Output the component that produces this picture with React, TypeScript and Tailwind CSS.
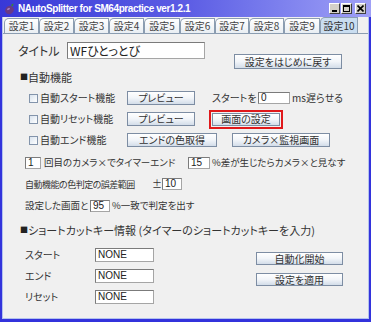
import type { FC, ReactNode } from 'react'

// ボタン (Swing 風のグラデーション)
const Btn: FC<{ className?: string; children: ReactNode }> = ({ className = '', children }) => (
  <div
    className={`flex shrink-0 items-center justify-center whitespace-nowrap border border-[#7d8da3] bg-gradient-to-b from-white via-[#f2f5f9] to-[#d3dde9] text-[10px] leading-none text-[#333] ${className}`}
  >
    {children}
  </div>
)

const Field: FC<{ className?: string; children?: ReactNode }> = ({ className = '', children }) => (
  <div
    className={`flex shrink-0 items-center border border-[#a5a5a5] border-l-[#7b7b7b] border-t-[#7b7b7b] bg-white pl-[2px] font-['Liberation_Sans',sans-serif] text-[10px] leading-none text-[#222] ${className}`}
  >
    {children}
  </div>
)

const Check: FC = () => (
  <div className="h-[9px] w-[9px] shrink-0 border border-[#8394ab] bg-gradient-to-br from-[#d9e3ee] to-white" />
)

const tabs = [
  { label: '設定1', w: 'w-[35px]' },
  { label: '設定2', w: 'w-[35px]' },
  { label: '設定3', w: 'w-[35px]' },
  { label: '設定4', w: 'w-[35px]' },
  { label: '設定5', w: 'w-[36px]' },
  { label: '設定6', w: 'w-[35px]' },
  { label: '設定7', w: 'w-[34px]' },
  { label: '設定8', w: 'w-[35px]' },
  { label: '設定9', w: 'w-[36px]' },
  { label: '設定10', w: 'w-[38px]' },
]

const TitleBar: FC = () => (
  <div className="flex h-[17px] shrink-0 items-center bg-gradient-to-r from-[#3838d8] via-[#5c5ce4] to-[#a0a0f6] pl-[3px] pr-[5px]">
    {/* ナスのアイコン */}
    <svg width="12" height="12" viewBox="0 0 12 12">
      <ellipse cx="6.5" cy="7" rx="4.5" ry="4" fill="#6a3a86" transform="rotate(-30 6.5 7)" />
      <ellipse cx="5.5" cy="6" rx="1.6" ry="1" fill="#a57cc0" transform="rotate(-30 5.5 6)" />
      <path d="M8.5 1.5 L10.5 0.5 L10 3 L8.5 3.5 Z" fill="#3c8a2e" />
    </svg>
    <span className="ml-[3px] font-['Liberation_Sans',sans-serif] text-[10px] font-bold leading-none tracking-[-0.4px] text-white">
      NAutoSplitter for SM64practice ver1.2.1
    </span>
    <div className="ml-auto flex items-center">
      <div className="flex h-[11px] w-[11px] items-end justify-center border border-[#fff] border-b-[#404040] border-r-[#404040] bg-[#d4d0c8] pb-[1px]">
        <div className="h-[2px] w-[5px] bg-black" />
      </div>
      <div className="ml-[1px] flex h-[11px] w-[11px] items-center justify-center border border-[#fff] border-b-[#404040] border-r-[#404040] bg-[#d4d0c8]">
        <div className="h-[7px] w-[7px] border border-t-2 border-black" />
      </div>
      <div className="ml-[3px] flex h-[11px] w-[11px] items-center justify-center border border-[#fff] border-b-[#404040] border-r-[#404040] bg-[#d4d0c8]">
        <svg width="7" height="7" viewBox="0 0 7 7">
          <path d="M0.5 0.5 L6.5 6.5 M6.5 0.5 L0.5 6.5" stroke="#000" strokeWidth="1.6" />
        </svg>
      </div>
    </div>
  </div>
)

const App: FC = () => {
  return (
    <div className="flex h-[322px] w-[371px] flex-col bg-[#3333dc] font-['Noto_Sans_CJK_JP',sans-serif] text-[#333] [font-feature-settings:'palt']">
      <TitleBar />

      <div className="mx-[2px] mb-[3px] flex flex-1 flex-col border-x border-b border-[#b3c2ee] bg-[#f0f0f0]">
        {/* タブ */}
        <div className="flex h-[16px] shrink-0 items-end pl-[1px]">
          {tabs.map((t, i) => {
            const active = i === tabs.length - 1
            return (
              <div
                key={t.label}
                className={`flex items-center justify-center rounded-tl-[5px] border border-b-0 border-[#8b9db1] text-[10px] leading-none ${t.w} ${
                  active ? 'h-[16px] bg-[#c9ddf0] text-[#333]' : 'h-[15px] bg-gradient-to-b from-white to-[#e9eef3] text-[#444]'
                }`}
              >
                {t.label}
              </div>
            )
          })}
        </div>

        {/* 設定パネル */}
        <div className="flex flex-1 flex-col whitespace-nowrap border-t border-[#8b9db1] pl-[15px] pt-[8px]">
          {/* タイトル */}
          <div className="flex h-[27px] items-start">
            <div className="flex h-[17px] items-center">
              <span className="w-[49px] text-[12px] leading-none">タイトル</span>
              <div className="flex h-[17px] w-[138px] items-center border border-[#a5a5a5] border-l-[#7b7b7b] border-t-[#7b7b7b] bg-white pl-[2px] text-[12px] leading-none text-[#222]">
                WFひとっとび
              </div>
            </div>
            <Btn className="ml-[29px] mt-[12px] h-[15px] w-[108px]">設定をはじめに戻す</Btn>
          </div>

          {/* 自動機能 */}
          <div className="mt-[2px] flex h-[12px] items-center pl-[2px]">
            <span className="text-[8px] leading-none text-[#222]">■</span>
            <span className="text-[11px] leading-none">自動機能</span>
          </div>

          <div className="mt-[8px] flex h-[14px] items-center pl-[11px]">
            <Check />
            <span className="ml-[2px] w-[87px] text-[10px] leading-none">自動スタート機能</span>
            <Btn className="h-[14px] w-[68px]">プレビュー</Btn>
            <span className="ml-[17px] w-[46px] text-[10px] leading-none">スタートを</span>
            <Field className="h-[12px] w-[32px]">0</Field>
            <span className="ml-[2px] text-[10px] leading-none">ms遅らせる</span>
          </div>

          <div className="mt-[7px] flex h-[14px] items-center pl-[11px]">
            <Check />
            <span className="ml-[2px] w-[87px] text-[10px] leading-none">自動リセット機能</span>
            <Btn className="h-[14px] w-[68px]">プレビュー</Btn>
            <Btn className="ml-[17px] h-[13px] w-[68px] outline-2 outline-offset-[1px] outline-[#e0191b]">画面の設定</Btn>
          </div>

          <div className="mt-[7px] flex h-[14px] items-center pl-[11px]">
            <Check />
            <span className="ml-[2px] w-[87px] text-[10px] leading-none">自動エンド機能</span>
            <Btn className="h-[14px] w-[90px]">エンドの色取得</Btn>
            <Btn className="ml-[15px] h-[14px] w-[98px]">カメラ×監視画面</Btn>
          </div>

          <div className="mt-[10px] flex h-[12px] items-center pl-[7px] text-[9.5px] leading-none">
            <Field className="h-[12px] w-[16px]">1</Field>
            <span className="ml-[3px] w-[144px]">回目のカメラ×でタイマーエンド</span>
            <Field className="h-[12px] w-[22px]">15</Field>
            <span className="ml-[2px]">%差が生じたらカメラ×と見なす</span>
          </div>

          <div className="mt-[9px] flex h-[12px] items-center pl-[7px] leading-none">
            <span className="w-[127px] text-[9px] tracking-[-0.5px]">自動機能の色判定の誤差範囲</span>
            <span className="w-[10px] text-[10px]">±</span>
            <Field className="h-[12px] w-[20px]">10</Field>
          </div>

          <div className="mt-[10px] flex h-[12px] items-center pl-[7px] text-[9.5px] leading-none">
            <span className="w-[65px]">設定した画面と</span>
            <Field className="h-[12px] w-[20px]">95</Field>
            <span className="ml-[2px]">%一致で判定を出す</span>
          </div>

          {/* ショートカットキー */}
          <div className="mt-[12px] flex h-[12px] items-center pl-[2px]">
            <span className="text-[8px] leading-none text-[#222]">■</span>
            <span className="text-[11px] leading-none">ショートカットキー情報 (タイマーのショートカットキーを入力)</span>
          </div>

          <div className="mt-[12px] flex items-start">
            <div className="flex flex-col gap-[7px] pl-[7px]">
              {['スタート', 'エンド', 'リセット'].map((k) => (
                <div key={k} className="flex h-[14px] items-center">
                  <span className="w-[70px] text-[10px] leading-none">{k}</span>
                  <Field className="h-[14px] w-[59px]">NONE</Field>
                </div>
              ))}
            </div>
            <div className="ml-[102px] mt-[4px] flex flex-col gap-[8px]">
              <Btn className="h-[13px] w-[87px]">自動化開始</Btn>
              <Btn className="h-[13px] w-[87px]">設定を適用</Btn>
            </div>
          </div>
        </div>
      </div>
    </div>
  )
}

export default App
